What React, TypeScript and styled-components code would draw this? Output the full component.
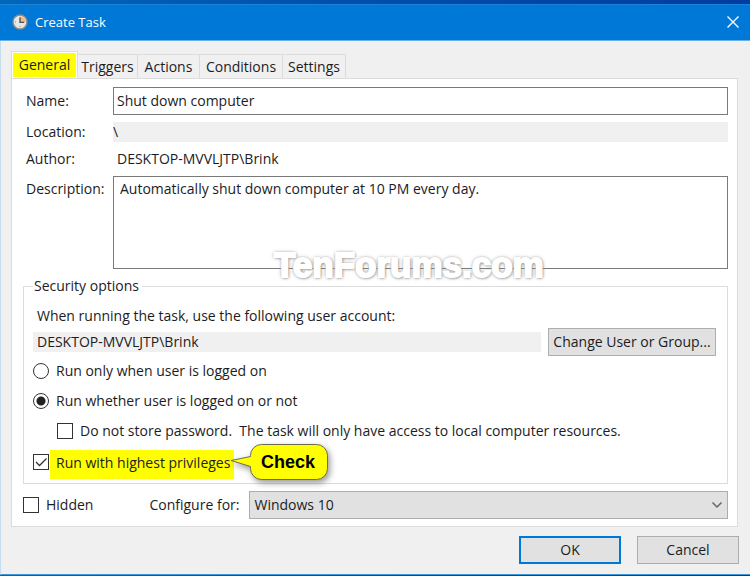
import React from "react";
import styled, { createGlobalStyle, css } from "styled-components";

const GlobalStyle = createGlobalStyle`
  *, *::before, *::after { box-sizing: border-box; }
  body {
    margin: 0;
    color: #1c1c24;
    background: #f0f0f0;
    font: 14px/20px "Open Sans", "Noto Sans", sans-serif;
  }
  button, input, textarea, select { font: inherit; color: inherit; margin: 0; }
`;

const Desktop = styled.div`
  min-height: 100vh;
  display: flex;
  flex-direction: column;
  padding-top: 4px;
  padding-bottom: 1px;
  background: linear-gradient(90deg, #0067bb, #004fae 45%, #003da2);
`;

const Dialog = styled.main`
  flex: 1;
  display: flex;
  flex-direction: column;
  background: #f0f0f0;
  border-left: 1px solid #c6ddf0;
  border-bottom: 1px solid #3f97d8;
`;

const TitleBar = styled.header`
  display: flex;
  align-items: center;
  gap: 7px;
  height: 37px;
  margin-left: -1px;
  padding: 0 10px 2px 12px;
  color: #fff;
  background: #0078d7;
  border-top: 1px solid #1c83d6;
  border-bottom: 1px solid #66b0e8;
`;

const Title = styled.h1`
  flex: 1;
  margin: 0;
  font-size: 13px;
  font-weight: 400;
`;

const CloseButton = styled.button`
  display: flex;
  padding: 0;
  border: 0;
  color: inherit;
  background: none;
`;

const Content = styled.div`
  padding: 10px 11px 9px 10px;
`;

const TabList = styled.div`
  display: flex;
  align-items: flex-end;
`;

const Tab = styled.button<{ $width: number; $active?: boolean }>`
  width: ${(p) => p.$width}px;
  height: 24px;
  padding: 0;
  border: 1px solid #dcdcdc;
  border-width: 1px 1px 0 0;
  background: #f0f0f0;
  line-height: 22px;
  white-space: nowrap;
  ${(p) =>
    p.$active &&
    css`
      height: 27px;
      border-width: 1px;
      border-bottom: 0;
      background: #ff0;
      box-shadow: inset 0 0 0 1px #fff;
    `}
`;

const Panel = styled.section`
  padding: 8px 9px 7px 11px;
  margin-right: 1px;
  background: #fff;
  border: 1px solid #dcdcdc;
`;

const FormGrid = styled.div`
  display: grid;
  grid-template-columns: 87px 1fr;
  row-gap: 7px;
  align-items: center;
  padding-left: 3px;
`;

const FieldLabel = styled.label<{ $top?: boolean }>`
  ${(p) => p.$top && "align-self: start; padding-top: 3px;"}
`;

const TextBox = styled.input`
  width: 100%;
  min-width: 0;
  height: 28px;
  padding: 0 3px 2px;
  border: 1px solid #7a7a7a;
  border-radius: 0;
  background: #fff;
`;

const ReadOnlyBox = styled.input<{ $flush?: boolean }>`
  flex: 1;
  width: 100%;
  min-width: 0;
  height: 20px;
  padding: 0 ${(p) => (p.$flush ? 0 : 4)}px;
  border: 0;
  background: #f0f0f0;
`;

const Author = styled.output`
  padding-left: 4px;
`;

const DescriptionBox = styled.textarea`
  display: block;
  width: 100%;
  height: 93px;
  padding: 2px 6px;
  border: 1px solid #7a7a7a;
  border-radius: 0;
  background: #fff;
  resize: none;
`;

const DescriptionCell = styled.div`
  position: relative;
`;

const Watermark = styled.div`
  position: absolute;
  left: 161px;
  bottom: -16px;
  color: #fff;
  font: bold 35px/40px "Liberation Sans", sans-serif;
  -webkit-text-stroke: 2px #fff;
  text-shadow: 0 0 2px #777, 1px 1px 3px #888, 0 0 4px #999;
  pointer-events: none;
`;

const Security = styled.fieldset`
  min-width: 0;
  margin: 7px 0 0;
  padding: 10px 11px 4px 9px;
  border: 1px solid #dcdcdc;
`;

const Legend = styled.legend`
  padding: 0 3px 0 1px;
`;

const Hint = styled.div`
  padding-left: 4px;
`;

const AccountRow = styled.div`
  display: flex;
  align-items: center;
  gap: 7px;
  margin-top: 2px;
`;

const PushButton = styled.button<{ $primary?: boolean; $wide?: boolean }>`
  width: ${(p) => (p.$wide ? 168 : 102)}px;
  height: 28px;
  padding: 0;
  border: ${(p) => (p.$primary ? "2px solid #0078d7" : "1px solid #adadad")};
  background: #e1e1e1;
  white-space: nowrap;
`;

const OptionRow = styled.div<{ $nested?: boolean; $marked?: boolean }>`
  display: flex;
  align-items: center;
  gap: 7px;
  height: 30px;
  padding-left: ${(p) => (p.$nested ? 24 : 0)}px;
  ${(p) =>
    p.$marked &&
    css`
      align-items: flex-start;
      gap: 1px;
      height: auto;
      padding-top: 4px;
    `}
`;

const Radio = styled.input.attrs({ type: "radio" })`
  appearance: none;
  width: 16px;
  height: 16px;
  border: 1px solid #333;
  border-radius: 50%;
  background: #fff;
  &:checked {
    background: radial-gradient(circle, #222 0 4px, #fff 5px);
  }
`;

const CheckFrame = styled.span<{ $lowered?: boolean }>`
  position: relative;
  display: flex;
  margin-top: ${(p) => (p.$lowered ? 4 : 0)}px;
  svg {
    position: absolute;
    inset: 0;
    pointer-events: none;
    visibility: hidden;
  }
  input:checked + svg { visibility: visible; }
`;

const CheckInput = styled.input.attrs({ type: "checkbox" })`
  appearance: none;
  width: 16px;
  height: 16px;
  border: 1px solid #333;
  background: #fff;
`;

const MarkedLabel = styled.label`
  position: relative;
  width: 184px;
  height: 29px;
  padding-left: 6px;
  line-height: 25px;
  white-space: nowrap;
  background: #ff0;
`;

const Callout = styled.div`
  position: absolute;
  left: calc(100% - 4px);
  top: -7px;
  width: 100px;
  height: 38px;
  padding-left: 31px;
  color: #000;
  font: bold 18px/38px "Liberation Sans", sans-serif;
  svg {
    position: absolute;
    left: 0;
    top: 0;
    overflow: visible;
    filter: drop-shadow(2px 3px 3px rgba(0, 0, 0, 0.4));
  }
  span { position: relative; }
`;

const BottomRow = styled.div`
  display: flex;
  align-items: center;
  gap: 7px;
  margin-top: 7px;
`;

const ConfigureLabel = styled.label`
  margin-left: 49px;
`;

const SelectFrame = styled.div`
  position: relative;
  flex: 1;
  margin-left: 3px;
  svg {
    position: absolute;
    right: 5px;
    top: 10px;
    pointer-events: none;
  }
`;

const Select = styled.select`
  appearance: none;
  display: block;
  width: 100%;
  height: 28px;
  padding: 0 24px 0 4px;
  border: 1px solid #adadad;
  border-radius: 0;
  background: #e1e1e1;
`;

const Footer = styled.footer`
  display: flex;
  justify-content: flex-end;
  gap: 16px;
  margin-top: 9px;
`;

function ClockIcon() {
  return (
    <svg width="16" height="16" viewBox="0 0 16 16" aria-hidden="true">
      <circle cx="8" cy="8" r="7" fill="#e9e7e2" stroke="#8b8b8b" strokeWidth="1.4" />
      <path d="M8 8V2.2A5.8 5.8 0 0 1 13.8 8Z" fill="#f2bd7b" />
      <path d="M8 3.5V8.4H12" fill="none" stroke="#4c5260" strokeWidth="1.4" />
      <path d="M3 8h1M8 12v1M12.5 8h.8" stroke="#888" />
    </svg>
  );
}

function Check({ id, checked, lowered }: { id: string; checked?: boolean; lowered?: boolean }) {
  return (
    <CheckFrame $lowered={lowered}>
      <CheckInput id={id} defaultChecked={checked} />
      <svg width="16" height="16" viewBox="0 0 16 16" aria-hidden="true">
        <path d="M3 8l3.5 3.5L13.5 4.5" fill="none" stroke="#333" strokeWidth="1.3" />
      </svg>
    </CheckFrame>
  );
}

const tabs = [
  { name: "General", width: 67 },
  { name: "Triggers", width: 60 },
  { name: "Actions", width: 62 },
  { name: "Conditions", width: 83 },
  { name: "Settings", width: 63 },
];

export default function App() {
  return (
    <>
      <GlobalStyle />
      <Desktop>
        <Dialog>
          <TitleBar>
            <ClockIcon />
            <Title>Create Task</Title>
            <CloseButton aria-label="Close">
              <svg width="14" height="14" viewBox="0 0 14 14">
                <path d="M1.5 1.5l11 11M12.5 1.5l-11 11" stroke="#fff" strokeWidth="1.4" />
              </svg>
            </CloseButton>
          </TitleBar>
          <Content>
            <TabList role="tablist">
              {tabs.map(({ name, width }, i) => (
                <Tab key={name} role="tab" aria-selected={i === 0} $width={width} $active={i === 0}>
                  {name}
                </Tab>
              ))}
            </TabList>
            <Panel>
              <FormGrid>
                <FieldLabel htmlFor="name">Name:</FieldLabel>
                <TextBox id="name" defaultValue="Shut down computer" />
                <FieldLabel htmlFor="location">Location:</FieldLabel>
                <ReadOnlyBox id="location" readOnly value={"\\"} $flush />
                <FieldLabel htmlFor="author">Author:</FieldLabel>
                <Author id="author">DESKTOP-MVVLJTP\Brink</Author>
                <FieldLabel htmlFor="description" $top>Description:</FieldLabel>
                <DescriptionCell>
                  <DescriptionBox
                    id="description"
                    defaultValue="Automatically shut down computer at 10 PM every day."
                  />
                  <Watermark>TenForums.com</Watermark>
                </DescriptionCell>
              </FormGrid>
              <Security>
                <Legend>Security options</Legend>
                <Hint id="account-hint">When running the task, use the following user account:</Hint>
                <AccountRow>
                  <ReadOnlyBox aria-labelledby="account-hint" readOnly value={"DESKTOP-MVVLJTP\\Brink"} />
                  <PushButton $wide>Change User or Group...</PushButton>
                </AccountRow>
                <OptionRow>
                  <Radio id="logged-on" name="run" />
                  <label htmlFor="logged-on">Run only when user is logged on</label>
                </OptionRow>
                <OptionRow>
                  <Radio id="always" name="run" defaultChecked />
                  <label htmlFor="always">Run whether user is logged on or not</label>
                </OptionRow>
                <OptionRow $nested>
                  <Check id="no-password" />
                  <label htmlFor="no-password">
                    Do not store password.&nbsp; The task will only have access to local computer resources.
                  </label>
                </OptionRow>
                <OptionRow $marked>
                  <Check id="privileges" checked lowered />
                  <MarkedLabel htmlFor="privileges">
                    Run with highest privileges
                    <Callout>
                      <svg width="100" height="38" viewBox="0 0 100 38" aria-hidden="true">
                        <path
                          d="M1 17.5L20.5 13.5V12.5A11 11 0 0 1 31.5 1.5H86.5A11 11 0 0 1 97.5 12.5V25.5A11 11 0 0 1 86.5 36.5H31.5A11 11 0 0 1 20.5 25.5V23.5Z"
                          fill="#ff0"
                          stroke="#6b6b50"
                        />
                      </svg>
                      <span>Check</span>
                    </Callout>
                  </MarkedLabel>
                </OptionRow>
              </Security>
              <BottomRow>
                <Check id="hidden" />
                <label htmlFor="hidden">Hidden</label>
                <ConfigureLabel htmlFor="configure">Configure for:</ConfigureLabel>
                <SelectFrame>
                  <Select id="configure" defaultValue="Windows 10">
                    <option>Windows 10</option>
                  </Select>
                  <svg width="12" height="8" viewBox="0 0 12 8" aria-hidden="true">
                    <path d="M1.5 1.5L6 6L10.5 1.5" fill="none" stroke="#666" strokeWidth="1.5" />
                  </svg>
                </SelectFrame>
              </BottomRow>
            </Panel>
            <Footer>
              <PushButton $primary>OK</PushButton>
              <PushButton>Cancel</PushButton>
            </Footer>
          </Content>
        </Dialog>
      </Desktop>
    </>
  );
}
